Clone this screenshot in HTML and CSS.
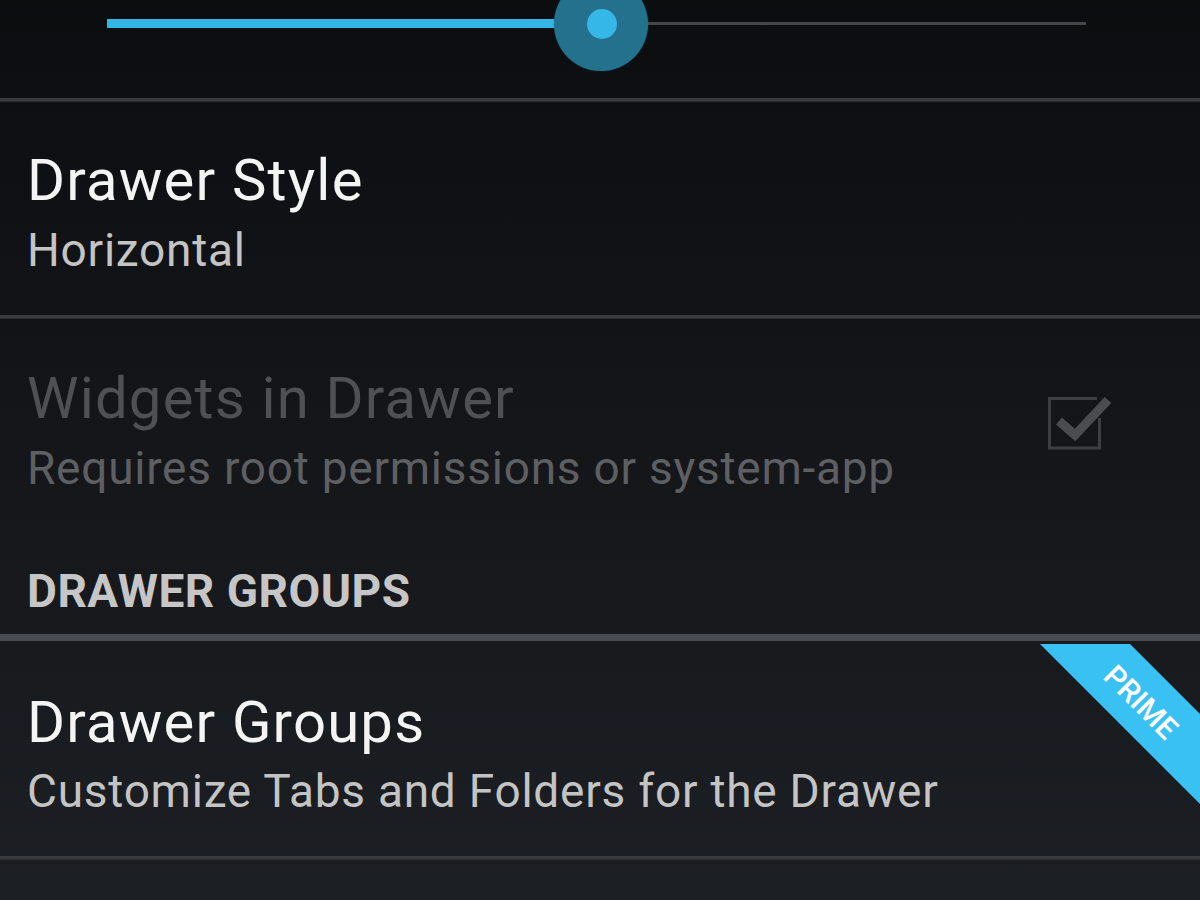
FILE: index.html
```html
<!DOCTYPE html>
<html lang="en">
<head>
<meta charset="utf-8">
<title>Drawer settings</title>
<link rel="stylesheet" href="styles.css">
</head>
<body>
<div class="screen">
  <div class="slider-area">
    <div class="slider">
      <div class="fill"><span class="halo"></span><span class="knob"></span></div>
      <div class="rest"></div>
    </div>
  </div>
  <div class="divider"></div>

  <div class="pref">
    <div class="pref-text">
      <div class="title">Drawer Style</div>
      <div class="summary">Horizontal</div>
    </div>
  </div>
  <div class="divider"></div>

  <div class="pref pref-disabled pref-open">
    <div class="pref-text">
      <div class="title">Widgets in Drawer</div>
      <div class="summary">Requires root permissions or system-app</div>
    </div>
    <svg class="checkbox" width="80" height="70" viewBox="0 0 80 70" aria-hidden="true">
      <path d="M57 8.5 H9.5 V58 H59.5 V28" fill="none" stroke="#3d3e41" stroke-width="3"/>
      <path d="M19 31 L35 45 L68 10" fill="none" stroke="#4b4c4f" stroke-width="9" stroke-linejoin="miter"/>
    </svg>
  </div>

  <div class="category">DRAWER GROUPS</div>
  <div class="divider divider-thick"></div>

  <div class="pref pref-prime">
    <div class="pref-text">
      <div class="title title-groups">Drawer Groups</div>
      <div class="summary summary-groups">Customize Tabs and Folders for the Drawer</div>
    </div>
    <svg class="ribbon" width="160" height="200" viewBox="0 0 160 200" aria-hidden="true">
      <polygon points="0,3 90,3 160,73 160,163" fill="#39c1f3"/>
      <text x="101" y="61" transform="rotate(45 101 61)" text-anchor="middle" dominant-baseline="central" class="ribbon-text">PRIME</text>
    </svg>
  </div>
  <div class="divider"></div>
</div>
</body>
</html>
```

FILE: styles.css
```css
html, body {
  margin: 0;
  padding: 0;
}

body {
  width: 1200px;
  height: 900px;
  overflow: hidden;
  background: linear-gradient(180deg, #0c0d0f 0%, #14161a 50%, #1c1f23 100%);
  font-family: Roboto, "Noto Sans", "Liberation Sans", sans-serif;
  color: #f2f2f2;
}

.screen {
  display: flex;
  flex-direction: column;
}

/* Slider */
.slider-area {
  height: 98px;
  padding-left: 107px;
  box-sizing: border-box;
}

.slider {
  display: flex;
  align-items: center;
  height: 46px;
  width: 979px;
}

.fill {
  position: relative;
  width: 494px;
  height: 9px;
  background: #33b5e5;
}

.rest {
  width: 485px;
  height: 3px;
  background: #46474a;
}

.halo {
  position: absolute;
  right: -47px;
  top: -42px;
  width: 94px;
  height: 94px;
  border-radius: 50%;
  background: #24718d;
  box-shadow: 0 0 2px 0 rgba(36, 113, 141, 0.5);
}

.knob {
  position: absolute;
  right: -16px;
  top: -10px;
  width: 30px;
  height: 30px;
  border-radius: 50%;
  background: #35b7e8;
}

/* Dividers */
.divider {
  height: 4px;
  background: linear-gradient(180deg, #3a3b3f 0%, #3a3b3f 60%, #26282b 100%);
}

.divider-thick {
  height: 7px;
  background: #484b4f;
}

/* Preferences */
.pref {
  display: flex;
  justify-content: space-between;
  padding: 45px 0 32px 27px;
}

.pref-open {
  padding-top: 46px;
  padding-bottom: 0;
  padding-right: 80px;
}

.pref-prime {
  position: relative;
  overflow: hidden;
  padding-top: 48px;
  padding-bottom: 32px;
}

.pref-text {
  display: flex;
  flex-direction: column;
}

.title {
  font-size: 58px;
  line-height: 66px;
  letter-spacing: 1.2px;
  color: #f4f4f4;
  white-space: nowrap;
}

.summary {
  margin-top: 4px;
  font-size: 46px;
  line-height: 66px;
  letter-spacing: 0.75px;
  color: #c4c4c4;
  white-space: nowrap;
}

.summary-groups {
  margin-top: 3px;
}

.pref-disabled .title {
  color: #4f5053;
}

.pref-disabled .summary {
  color: #5e5f62;
}

.checkbox {
  margin-top: 25px;
  flex: none;
}

/* Category header */
.category {
  margin-top: 57px;
  padding: 0 0 10px 27px;
  font-size: 46px;
  line-height: 66px;
  letter-spacing: 0.5px;
  font-weight: 700;
  color: #c6c6c6;
}

/* Prime ribbon */
.ribbon {
  position: absolute;
  top: 0;
  right: 0;
}

.ribbon-text {
  font-family: Roboto, "Noto Sans", "Liberation Sans", sans-serif;
  font-size: 30px;
  font-weight: 500;
  fill: #ffffff;
}
```
